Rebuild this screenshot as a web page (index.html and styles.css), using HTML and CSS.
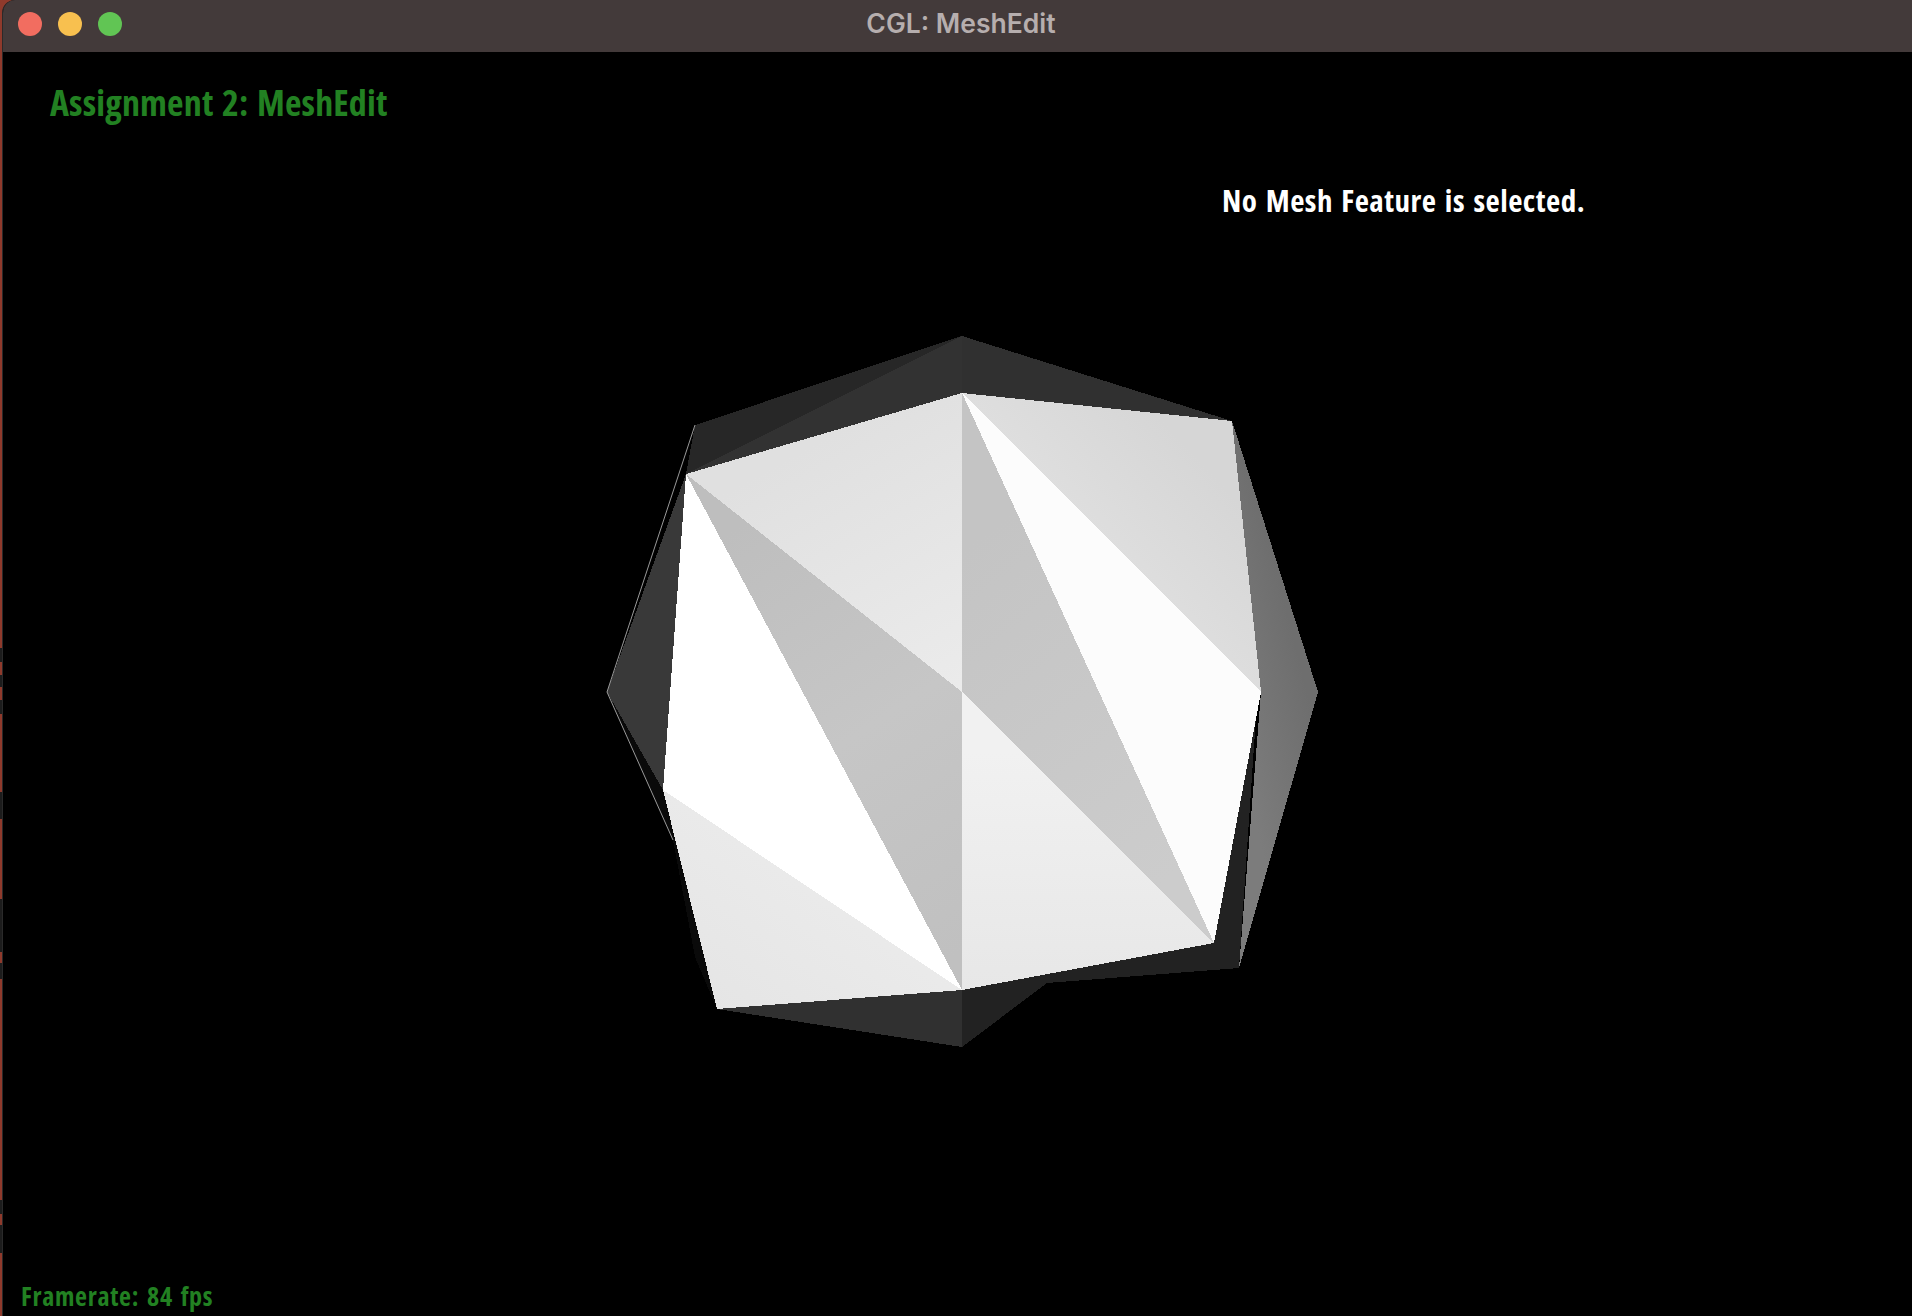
FILE: index.html
```html
<!DOCTYPE html>
<html lang="en">
<head>
<meta charset="utf-8">
<title>CGL: MeshEdit</title>
<link rel="stylesheet" href="styles.css">
</head>
<body>
<div class="desktop">
  <div class="window">
    <header class="titlebar">
      <div class="lights">
        <span class="light light-red"></span>
        <span class="light light-yellow"></span>
        <span class="light light-green"></span>
      </div>
      <div class="title">CGL: MeshEdit</div>
    </header>
    <main class="viewport">
      <svg class="mesh" viewBox="3 0 1909 1264" width="1909" height="1264" xmlns="http://www.w3.org/2000/svg">
        <defs>
          <linearGradient id="gTL" gradientUnits="userSpaceOnUse" x1="800" y1="400" x2="960" y2="690"><stop offset="0" stop-color="#e0e0e0"/><stop offset="1" stop-color="#ededed"/></linearGradient>
          <linearGradient id="gGL" gradientUnits="userSpaceOnUse" x1="700" y1="500" x2="960" y2="900"><stop offset="0" stop-color="#bebebe"/><stop offset="0.5" stop-color="#c6c6c6"/><stop offset="1" stop-color="#c0c0c0"/></linearGradient>
          <linearGradient id="gLL" gradientUnits="userSpaceOnUse" x1="720" y1="1000" x2="860" y2="800"><stop offset="0" stop-color="#e4e4e4"/><stop offset="1" stop-color="#ececec"/></linearGradient>
          <linearGradient id="gBC" gradientUnits="userSpaceOnUse" x1="962" y1="700" x2="962" y2="990"><stop offset="0" stop-color="#f1f1f1"/><stop offset="1" stop-color="#e5e5e5"/></linearGradient>
          <linearGradient id="gGR" gradientUnits="userSpaceOnUse" x1="962" y1="500" x2="1200" y2="800"><stop offset="0" stop-color="#c4c4c4"/><stop offset="1" stop-color="#cccccc"/></linearGradient>
          <linearGradient id="gUR" gradientUnits="userSpaceOnUse" x1="1220" y1="430" x2="1080" y2="560"><stop offset="0" stop-color="#d6d6d6"/><stop offset="1" stop-color="#e2e2e2"/></linearGradient>
          <linearGradient id="gSide" gradientUnits="userSpaceOnUse" x1="1320" y1="690" x2="1240" y2="710"><stop offset="0" stop-color="#6e6e6e"/><stop offset="1" stop-color="#7c7c7c"/></linearGradient>
        </defs>
        <g shape-rendering="crispEdges">
          <polygon fill="#272727" points="695,373 962,284 686,422"/>
          <polygon fill="#323232" points="962,284 962,341 686,422"/>
          <polygon fill="#303030" points="962,284 1232,369 962,341"/>
          <polygon fill="#393939" points="686,422 607,640 663,738"/>
          <polygon fill="#0a0a0a" points="607,640 663,738 717,957 695,905 673,788"/>
          <polygon fill="url(#gSide)" points="1232,369 1318,640 1239,916 1261,640"/>
          <polygon fill="#222222" points="1261,640 1257,650 1239,916 1047,931 962,995 962,938 1214,891"/>
          <polygon fill="#303030" points="717,957 962,938 962,995"/>
          <polygon fill="url(#gTL)" points="686,422 962,341 962,640"/>
          <polygon fill="url(#gGL)" points="686,422 962,640 962,938"/>
          <polygon fill="#ffffff" points="686,422 962,938 663,738"/>
          <polygon fill="url(#gLL)" points="663,738 962,938 717,957"/>
          <polygon fill="url(#gBC)" points="962,640 1214,891 962,938"/>
          <polygon fill="url(#gGR)" points="962,341 1214,891 962,640"/>
          <polygon fill="#fcfcfc" points="962,341 1261,640 1214,891"/>
          <polygon fill="url(#gUR)" points="962,341 1232,369 1261,640"/>
        </g>
        <g class="slivers">
          <line x1="695" y1="373" x2="607" y2="640"/>
          <line x1="607" y1="640" x2="673" y2="788"/>
        </g>
      </svg>
      <h1 class="heading">Assignment 2: MeshEdit</h1>
      <p class="status">No Mesh Feature is selected.</p>
      <p class="framerate">Framerate: 84 fps</p>
    </main>
  </div>
</div>
</body>
</html>
```
FILE: styles.css
```css
html, body {
  margin: 0;
  padding: 0;
  height: 100%;
  background: #000;
  overflow: hidden;
}
.desktop {
  height: 1316px;
  width: 1912px;
  display: flex;
  box-sizing: border-box;
  padding-left: 2px;
  background-color: #8f3a2c;
  background-image: linear-gradient(to bottom,
    transparent 648px, #1c1c1c 648px, #1c1c1c 662px, transparent 662px,
    transparent 675px, #1c1c1c 675px, #1c1c1c 687px, transparent 687px,
    transparent 700px, #1c1c1c 700px, #1c1c1c 714px, transparent 714px,
    transparent 792px, #1c1c1c 792px, #1c1c1c 819px, transparent 819px,
    transparent 899px, #1c1c1c 899px, #1c1c1c 952px, transparent 952px,
    transparent 963px, #1c1c1c 963px, #1c1c1c 979px, transparent 979px,
    transparent 1200px, #1c1c1c 1200px, #1c1c1c 1214px, transparent 1214px,
    transparent 1225px, #1c1c1c 1225px, #1c1c1c 1253px, transparent 1253px);
}
.window {
  flex: 1;
  display: flex;
  flex-direction: column;
  background: #000;
  border-left: 1px solid #2a2a2a;
  border-top-left-radius: 13px;
  overflow: hidden;
}
.titlebar {
  height: 52px;
  flex: none;
  background: #433a3a;
  display: flex;
  align-items: center;
  justify-content: center;
  position: relative;
}
.lights {
  position: absolute;
  left: 15px;
  top: 12px;
  display: flex;
  gap: 16px;
}
.light {
  width: 24px;
  height: 24px;
  border-radius: 50%;
}
.light-red { background: #f26d60; }
.light-yellow { background: #f8c04f; }
.light-green { background: #61c554; }
.title {
  font-family: Inter, "Liberation Sans", sans-serif;
  font-weight: 600;
  font-size: 26.5px;
  color: #b6aeae;
  margin-top: -6px;
  margin-left: 7px;
}
.viewport {
  flex: 1;
  position: relative;
  background: #000;
}
.mesh {
  display: block;
}
.slivers line {
  stroke: #9a9a9a;
  stroke-width: 1;
}
.heading, .status, .framerate {
  position: absolute;
  margin: 0;
  font-family: "Open Sans", sans-serif;
  font-weight: 700;
  font-stretch: 75%;
  white-space: nowrap;
}
.heading {
  left: 47px;
  top: 26px;
  font-size: 36px;
  letter-spacing: 0.15px;
  word-spacing: 1.9px;
  color: #228122;
}
.status {
  left: 1219px;
  top: 127px;
  font-size: 31px;
  letter-spacing: 0.5px;
  word-spacing: 2.3px;
  color: #fff;
}
.framerate {
  left: 18px;
  top: 1226px;
  font-size: 26px;
  letter-spacing: 0.7px;
  word-spacing: 2.5px;
  color: #228122;
}
```
